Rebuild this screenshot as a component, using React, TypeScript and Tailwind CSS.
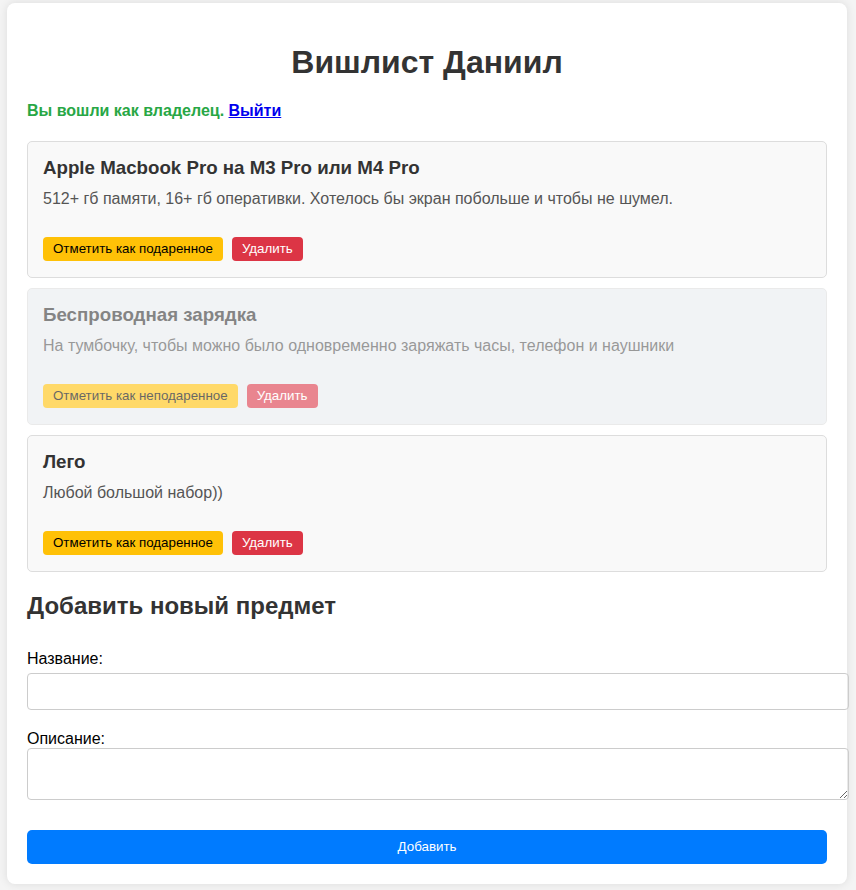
import React, { useState } from "react";

type Item = { id: number; name: string; desc: string; gifted: boolean };

const initialItems: Item[] = [
  {
    id: 1,
    name: "Apple Macbook Pro на M3 Pro или M4 Pro",
    desc: "512+ гб памяти, 16+ гб оперативки. Хотелось бы экран побольше и чтобы не шумел.",
    gifted: false,
  },
  {
    id: 2,
    name: "Беспроводная зарядка",
    desc: "На тумбочку, чтобы можно было одновременно заряжать часы, телефон и наушники",
    gifted: true,
  },
  { id: 3, name: "Лего", desc: "Любой большой набор))", gifted: false },
];

const styles = {
  page: `min-h-screen w-full bg-[#f4f4f4] pt-[3px] font-['Liberation_Sans',Arial,sans-serif]`,
  wrapper: `ml-[7px] w-[840px] rounded-[8px] bg-white p-5 shadow-[0_0_10px_rgba(0,0,0,0.1)]`,
  card: `mb-[10px] rounded-[5px] border border-[#ddd] px-[15px] pt-[15px] pb-[16px]`,
  btn: `h-6 rounded-[4px] px-[10px] text-[13.333px] leading-6`,
  input: `box-content w-full rounded-[4px] border border-[#ccc] px-[10px] py-[8px] text-base leading-[19px] outline-none`,
};

export default function App() {
  const [items, setItems] = useState<Item[]>(initialItems);
  const [name, setName] = useState("");
  const [desc, setDesc] = useState("");

  const toggle = (id: number) =>
    setItems(items.map((r) => (r.id == id ? { ...r, gifted: !r.gifted } : r)));

  const remove = (id: number) => setItems(items.filter((r) => r.id != id));

  const add = (e: any) => {
    e.preventDefault();
    if (!name) return;
    setItems([...items, { id: Date.now(), name, desc, gifted: false }]);
    setName("");
    setDesc("");
  };

  return (
    <div className={styles.page}>
      <div className={styles.wrapper}>
        <h1 className="mt-[21px] mb-[21px] text-center text-[32px] font-bold leading-[37px] text-[#333]">
          Вишлист Даниил
        </h1>
        <p className="text-base font-bold leading-[18px] text-[#28a745]">
          Вы вошли как владелец.{" "}
          <a href="#" className="text-[#0000ee] underline">
            Выйти
          </a>
        </p>

        <div className="mt-[21px]">
          {items.map((r) => (
            <div
              key={r.id}
              className={`${styles.card} ${r.gifted ? "bg-[#e9ecef] opacity-60" : "bg-[#f9f9f9]"}`}
            >
              <h3 className="text-[18.72px] font-bold leading-[22px] text-[#333]">{r.name}</h3>
              <p className="mt-[11px] text-base leading-[18px] text-[#555]">{r.desc}</p>
              <div className="mt-[29px] flex flex-row gap-[9px]">
                <button
                  onClick={() => toggle(r.id)}
                  className={`${styles.btn} bg-[#ffc107] text-black`}
                >
                  {r.gifted ? "Отметить как неподаренное" : "Отметить как подаренное"}
                </button>
                <button
                  onClick={() => remove(r.id)}
                  className={`${styles.btn} bg-[#dc3545] text-white`}
                >
                  Удалить
                </button>
              </div>
            </div>
          ))}
        </div>

        <h2 className="mt-[20px] text-2xl font-bold leading-[28px] text-[#333]">
          Добавить новый предмет
        </h2>

        <form onSubmit={add} className="mt-[30px] flex flex-col">
          <label className="text-base leading-[18px] text-black">Название:</label>
          <input
            value={name}
            onChange={(e) => setName(e.target.value)}
            className={`${styles.input} mt-[5px]`}
          />
          <label className="mt-[20px] text-base leading-[18px] text-black">Описание:</label>
          <textarea
            value={desc}
            onChange={(e) => setDesc(e.target.value)}
            className={`${styles.input} mt-0 h-[34px] resize-y`}
          />
          <button
            type="submit"
            className="mt-[30px] h-[34px] w-full rounded-[5px] bg-[#007bff] text-[13.333px] text-white"
          >
            Добавить
          </button>
        </form>
      </div>
    </div>
  );
}
